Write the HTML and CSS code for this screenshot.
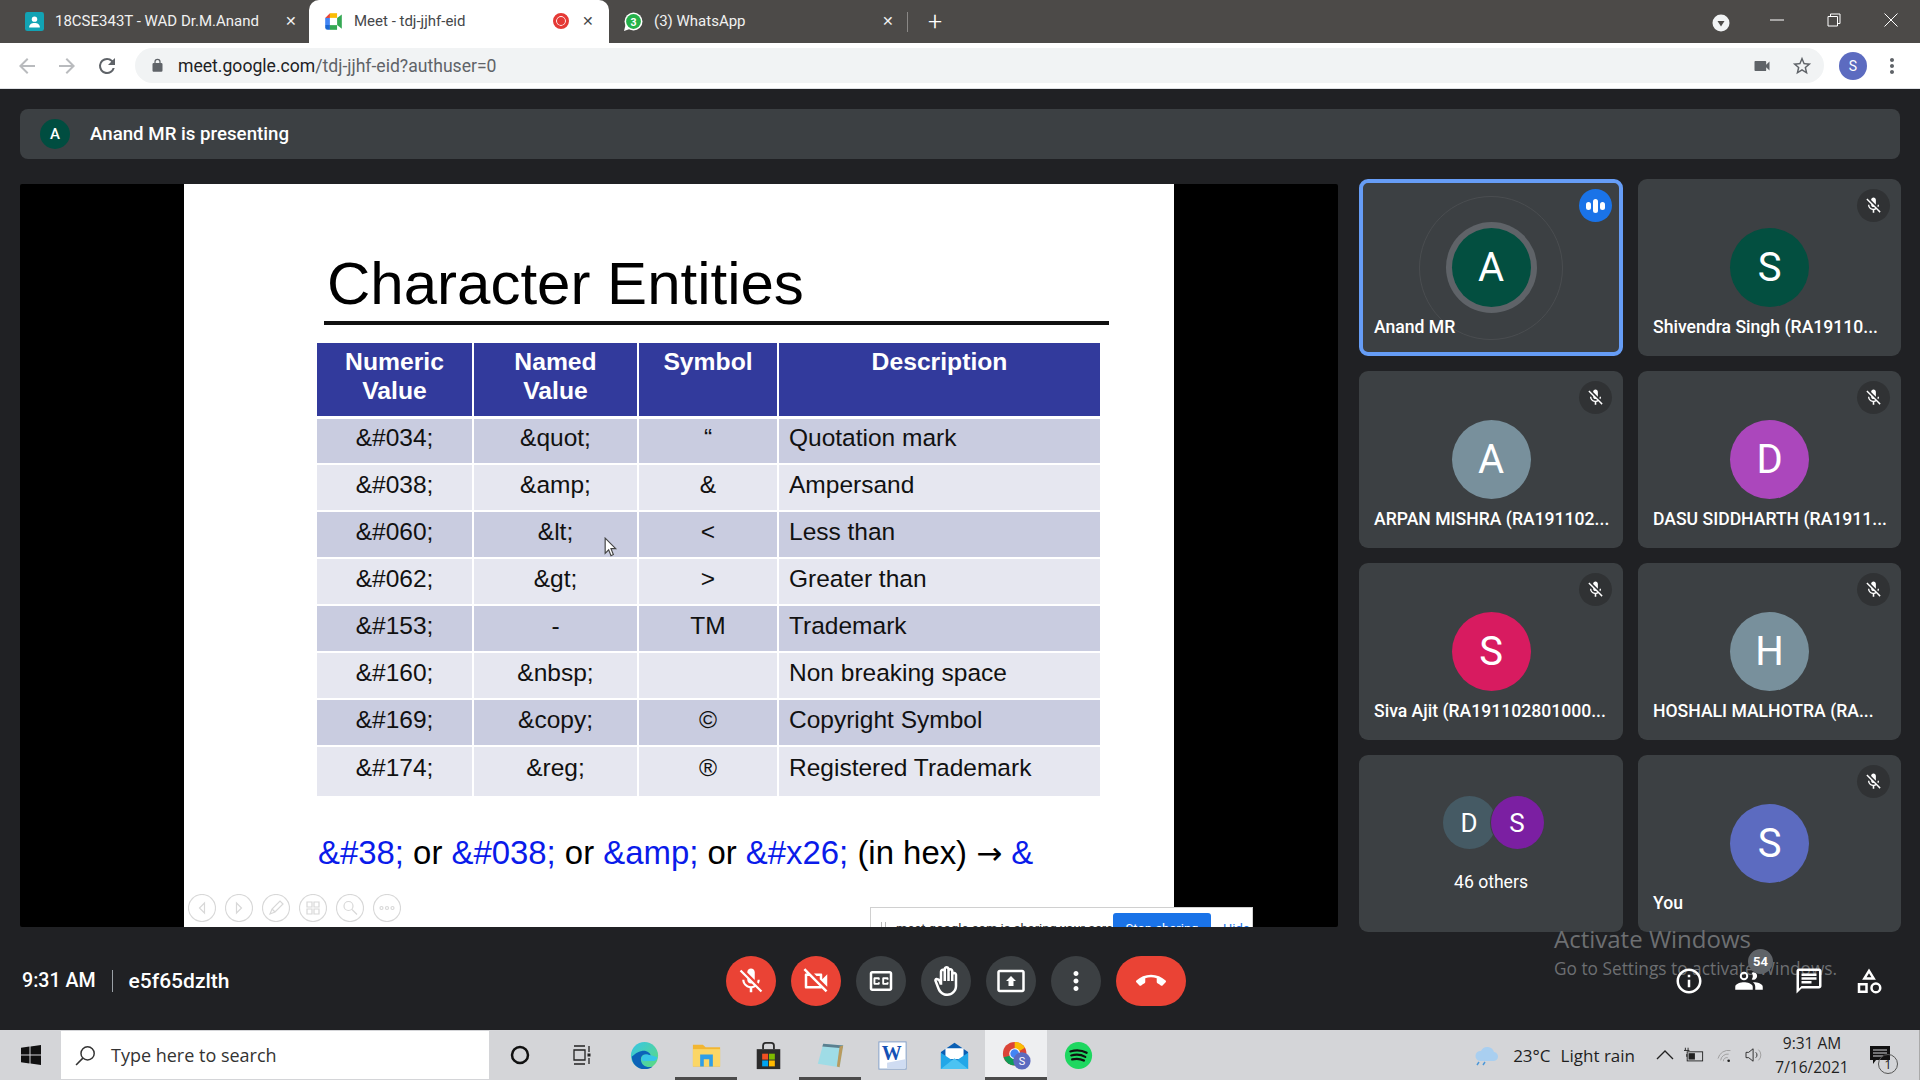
FILE: index.html
```html
<!DOCTYPE html>
<html lang="en">
<head>
    <meta charset="UTF-8">
    <title>Meet - tdj-jjhf-eid</title>
    <link rel="stylesheet" href="styles.css">
</head>
<body>
    <svg class="defs" aria-hidden="true">
        <symbol id="i-mic-off" viewBox="0 0 24 24"><path d="M19 11h-1.7c0 .74-.16 1.43-.43 2.05l1.23 1.23c.56-.98.9-2.09.9-3.28zm-4.02.17c0-.06.02-.11.02-.17V5c0-1.66-1.34-3-3-3S9 3.34 9 5v.18l5.98 5.99zM4.27 3L3 4.27l6.01 6.01V11c0 1.66 1.33 3 2.99 3 .22 0 .44-.03.65-.08l1.66 1.66c-.71.33-1.5.52-2.31.52-2.76 0-5.3-2.1-5.3-5.1H5c0 3.41 2.72 6.23 6 6.72V21h2v-3.28c.91-.13 1.77-.45 2.54-.9L19.73 21 21 19.73 4.27 3z"/></symbol>
        <symbol id="i-cam-off" viewBox="0 0 24 24"><path d="M9.56 8l-2-2-4.15-4.14L2 3.27 4.73 6H4c-.55 0-1 .45-1 1v10c0 .55.45 1 1 1h12c.21 0 .39-.08.55-.18L19.73 21l1.41-1.41-8.86-8.86L9.56 8zM5 16V8h1.73l8 8H5zm10-8v2.61l6 6V6.5l-4 4V7c0-.55-.45-1-1-1h-5.61l2 2H15z"/></symbol>
        <symbol id="i-cc" viewBox="0 0 24 24"><path d="M19 4H5c-1.11 0-2 .9-2 2v12c0 1.1.89 2 2 2h14c1.1 0 2-.9 2-2V6c0-1.1-.9-2-2-2zm0 14H5V6h14v12zM7 15h3c.55 0 1-.45 1-1v-1H9.5v.5h-2v-3h2v.5H11v-1c0-.55-.45-1-1-1H7c-.55 0-1 .45-1 1v4c0 .55.45 1 1 1zm7 0h3c.55 0 1-.45 1-1v-1h-1.5v.5h-2v-3h2v.5H18v-1c0-.55-.45-1-1-1h-3c-.55 0-1 .45-1 1v4c0 .55.45 1 1 1z"/></symbol>
        <symbol id="i-hand" viewBox="0 0 24 24"><path d="M21 7c0-1.38-1.12-2.5-2.5-2.5-.17 0-.34.02-.5.05V4c0-1.38-1.12-2.5-2.5-2.5-.23 0-.46.03-.67.09C14.46.66 13.56 0 12.5 0c-1.23 0-2.25.89-2.46 2.06C9.87 2.02 9.69 2 9.5 2 8.12 2 7 3.12 7 4.5v5.89c-.34-.31-.76-.54-1.22-.66L5.01 9.5c-.83-.23-1.7.09-2.19.83-.38.57-.4 1.31-.15 1.95l2.56 6.43C6.49 21.91 9.57 24 13 24c4.42 0 8-3.58 8-8V7zm-2 9c0 3.31-2.69 6-6 6-2.61 0-4.95-1.59-5.91-4.01l-2.6-6.54.53.14c.46.12.83.46 1 .9L7 15h2V4.5c0-.28.22-.5.5-.5s.5.22.5.5V12h2V2.5c0-.28.22-.5.5-.5s.5.22.5.5V12h2V4c0-.28.22-.5.5-.5s.5.22.5.5v8h2V7c0-.28.22-.5.5-.5s.5.22.5.5v9z"/></symbol>
        <symbol id="i-present" viewBox="0 0 24 24"><path d="M21 3H3c-1.11 0-2 .89-2 2v14c0 1.11.89 2 2 2h18c1.11 0 2-.89 2-2V5c0-1.11-.89-2-2-2zm0 16.02H3V4.98h18v14.04zM10 12H8l4-4 4 4h-2v4h-4v-4z"/></symbol>
        <symbol id="i-more" viewBox="0 0 24 24"><path d="M12 8c1.1 0 2-.9 2-2s-.9-2-2-2-2 .9-2 2 .9 2 2 2zm0 2c-1.1 0-2 .9-2 2s.9 2 2 2 2-.9 2-2-.9-2-2-2zm0 6c-1.1 0-2 .9-2 2s.9 2 2 2 2-.9 2-2-.9-2-2-2z"/></symbol>
        <symbol id="i-end" viewBox="0 0 24 24"><path d="M12 9c-1.6 0-3.15.25-4.6.72v3.1c0 .39-.23.74-.56.9-.98.49-1.87 1.12-2.66 1.85-.18.18-.43.28-.7.28-.28 0-.53-.11-.71-.29L.29 13.08c-.18-.17-.29-.42-.29-.7 0-.28.11-.53.29-.71C3.34 8.78 7.46 7 12 7s8.66 1.78 11.71 4.67c.18.18.29.43.29.71 0 .28-.11.53-.29.71l-2.48 2.48c-.18.18-.43.29-.71.29-.27 0-.52-.11-.7-.28-.79-.74-1.69-1.36-2.67-1.85-.33-.16-.56-.5-.56-.9v-3.1C15.15 9.25 13.6 9 12 9z"/></symbol>
        <symbol id="i-info" viewBox="0 0 24 24"><path d="M11 7h2v2h-2zm0 4h2v6h-2zm1-9C6.48 2 2 6.48 2 12s4.48 10 10 10 10-4.48 10-10S17.52 2 12 2zm0 18c-4.41 0-8-3.59-8-8s3.59-8 8-8 8 3.59 8 8-3.59 8-8 8z"/></symbol>
        <symbol id="i-people" viewBox="0 0 24 24"><path d="M8 13c-2.33 0-7 1.17-7 3.5V19h14v-2.5c0-2.33-4.67-3.5-7-3.5zm8 0c-.29 0-.62.02-.97.05 1.16.84 1.97 1.97 1.97 3.45V19h6v-2.5c0-2.33-4.67-3.5-7-3.5z"/><circle cx="8" cy="8" r="2.6" fill="none" stroke="#fff" stroke-width="1.6"/><path d="M14.2 5.3a3 3 0 1 1 0 5.4 5 5 0 0 0 0-5.4z"/></symbol>
        <symbol id="i-chat" viewBox="0 0 24 24"><path d="M20 2H4c-1.1 0-2 .9-2 2v18l4-4h14c1.1 0 2-.9 2-2V4c0-1.1-.9-2-2-2zm0 14H6l-2 2V4h16v12zM6 6h12v2H6zm0 3h12v2H6zm0 3h8v2H6z"/></symbol>
        <symbol id="i-shapes" viewBox="0 0 24 24"><path d="M12 2l5.500 9h-11L12 2zm0 3.840L10.070 9h3.860L12 5.840z"/><path d="M3 13.500h8v8H3v-8zm2 2v4h4v-4H5z"/><path d="M17.500 13a4.500 4.500 0 1 1 0 9 4.500 4.500 0 0 1 0-9zm0 2a2.500 2.500 0 1 0 0 5 2.500 2.500 0 0 0 0-5z"/></symbol>
    </svg>

    <div class="tab-strip">
        <div class="tab first">
            <svg class="fav" viewBox="0 0 16 16"><rect width="16" height="16" rx="2" fill="#12a3b4"/><circle cx="8" cy="6" r="2.300" fill="#fff"/><path d="M3.500 13c0-2.500 2-3.700 4.500-3.700s4.500 1.200 4.500 3.700z" fill="#fff"/></svg>
            <span class="tab-title">18CSE343T - WAD Dr.M.Anand</span>
            <span class="tab-x">✕</span>
        </div>
        <div class="tab active">
            <svg class="fav" viewBox="0 0 16 16"><path d="M1 5l4-4v4z" fill="#ea4335"/><path d="M5 1h6v4H5z" fill="#fbbc04"/><path d="M1 5h4v6H1z" fill="#4285f4"/><path d="M1 11h4v4H3a2 2 0 0 1-2-2z" fill="#1967d2"/><path d="M5 11h6v4H5z" fill="#34a853"/><path d="M11 5l4-3v12l-4-3z" fill="#34a853"/><rect x="5" y="5" width="6" height="6" fill="#fff"/></svg>
            <span class="tab-title">Meet - tdj-jjhf-eid</span>
            <span class="rec"></span>
            <span class="tab-x">✕</span>
        </div>
        <div class="tab">
            <svg class="fav" viewBox="0 0 18 18"><circle cx="9" cy="9" r="8.500" fill="#fff"/><circle cx="9" cy="9" r="7" fill="#25b14a"/><path d="M0 18l1.500-6 4 4z" fill="#fff"/><text x="9" y="12.800" class="fav-num">3</text></svg>
            <span class="tab-title">(3) WhatsApp</span>
            <span class="tab-x">✕</span>
        </div>
        <span class="tab-sep"></span>
        <span class="tab-plus">+</span>
        <div class="win-controls">
            <svg class="tab-search" viewBox="0 0 18 18"><circle cx="9" cy="9" r="8.500" fill="#f1f3f4"/><path d="M5.500 7h7L9 12.500z" fill="#4c4a48"/></svg>
            <svg class="win-btn" viewBox="0 0 14 14"><path d="M0 7h14" stroke="#fff" fill="none"/></svg>
            <svg class="win-btn" viewBox="0 0 14 14"><path d="M1 3.500h9.500V13H1zM3.500 3.500V1H13v9.500h-2.500" stroke="#fff" fill="none"/></svg>
            <svg class="win-btn" viewBox="0 0 14 14"><path d="M.5.500l13 13M13.500.500l-13 13" stroke="#fff" fill="none"/></svg>
        </div>
    </div>

    <div class="toolbar">
        <svg class="nav-ico faded" viewBox="0 0 24 24"><path d="M20 11H7.830l5.590-5.590L12 4l-8 8 8 8 1.410-1.410L7.830 13H20z"/></svg>
        <svg class="nav-ico faded" viewBox="0 0 24 24"><path d="M12 4l-1.410 1.410L16.170 11H4v2h12.170l-5.580 5.590L12 20l8-8z"/></svg>
        <svg class="nav-ico" viewBox="0 0 24 24"><path d="M17.650 6.350A7.960 7.960 0 0 0 12 4a8 8 0 1 0 7.730 10h-2.080A6 6 0 1 1 12 6c1.660 0 3.140.69 4.220 1.780L13 11h7V4z"/></svg>
        <div class="omnibox">
            <svg class="lock" viewBox="0 0 24 24"><path d="M18 8h-1V6A5 5 0 0 0 7 6v2H6a2 2 0 0 0-2 2v10c0 1.100.9 2 2 2h12a2 2 0 0 0 2-2V10a2 2 0 0 0-2-2zM9 6a3 3 0 0 1 6 0v2H9z"/></svg>
            <span class="url"><b>meet.google.com</b>/tdj-jjhf-eid?authuser=0</span>
            <svg class="omni-cam" viewBox="0 0 24 24"><path d="M17 10.500V7a1 1 0 0 0-1-1H4a1 1 0 0 0-1 1v10c0 .55.45 1 1 1h12a1 1 0 0 0 1-1v-3.500l4 4v-11z"/></svg>
            <svg class="omni-star" viewBox="0 0 24 24"><path d="M22 9.240l-7.190-.62L12 2 9.190 8.630 2 9.240l5.460 4.730L5.820 21 12 17.270 18.180 21l-1.630-7.030L22 9.240zM12 15.400l-3.760 2.270 1-4.280-3.320-2.880 4.380-.38L12 6.100l1.710 4.040 4.380.38-3.320 2.880 1 4.280L12 15.400z"/></svg>
        </div>
        <span class="profile">S</span>
        <svg class="nav-ico dots" viewBox="0 0 24 24"><use href="#i-more"/></svg>
    </div>

    <div class="page">
        <div class="present-bar">
            <span class="present-avatar">A</span>
            <span>Anand MR is presenting</span>
        </div>

        <div class="main">
            <div class="stage">
                <div class="slide">
                    <h1 class="slide-title">Character Entities</h1>
                    <div class="slide-rule"></div>
                    <table class="entities">
                        <thead>
                            <tr><th>Numeric<br>Value</th><th>Named<br>Value</th><th>Symbol</th><th>Description</th></tr>
                        </thead>
                        <tbody>
                            <tr><td>&amp;#034;</td><td>&amp;quot;</td><td>“</td><td class="desc">Quotation mark</td></tr>
                            <tr><td>&amp;#038;</td><td>&amp;amp;</td><td>&amp;</td><td class="desc">Ampersand</td></tr>
                            <tr><td>&amp;#060;</td><td>&amp;lt;</td><td>&lt;</td><td class="desc">Less than</td></tr>
                            <tr><td>&amp;#062;</td><td>&amp;gt;</td><td>&gt;</td><td class="desc">Greater than</td></tr>
                            <tr><td>&amp;#153;</td><td>-</td><td>TM</td><td class="desc">Trademark</td></tr>
                            <tr><td>&amp;#160;</td><td>&amp;nbsp;</td><td></td><td class="desc">Non breaking space</td></tr>
                            <tr><td>&amp;#169;</td><td>&amp;copy;</td><td>©</td><td class="desc">Copyright Symbol</td></tr>
                            <tr><td>&amp;#174;</td><td>&amp;reg;</td><td>®</td><td class="desc">Registered Trademark</td></tr>
                        </tbody>
                    </table>
                    <p class="slide-foot"><span class="blue">&amp;#38;</span> or <span class="blue">&amp;#038;</span> or <span class="blue">&amp;amp;</span> or <span class="blue">&amp;#x26;</span> (in hex) <span class="arrow">→</span> <span class="blue">&amp;</span></p>
                </div>
                <svg class="pointer" viewBox="0 0 12 18"><path d="M1 1v13l3-3 2 5 2-1-2-5h4z" fill="#fff" stroke="#444"/></svg>
                <div class="show-controls">
                    <svg class="show-btn" viewBox="0 0 28 28"><circle cx="14" cy="14" r="13.500"/><path d="M16.500 9l-5 5 5 5z"/></svg>
                    <svg class="show-btn" viewBox="0 0 28 28"><circle cx="14" cy="14" r="13.500"/><path d="M11.500 9l5 5-5 5z"/></svg>
                    <svg class="show-btn" viewBox="0 0 28 28"><circle cx="14" cy="14" r="13.500"/><path d="M8 20l2-5 8-8 3 3-8 8zM10 15l3 3"/></svg>
                    <svg class="show-btn" viewBox="0 0 28 28"><circle cx="14" cy="14" r="13.500"/><path d="M8 8h5v5H8zM15 8h5v5h-5zM8 15h5v5H8zM15 15h5v5h-5z"/></svg>
                    <svg class="show-btn" viewBox="0 0 28 28"><circle cx="14" cy="14" r="13.500"/><circle cx="12.500" cy="12" r="4.500"/><path d="M16 15.500l5 5"/></svg>
                    <svg class="show-btn" viewBox="0 0 28 28"><circle cx="14" cy="14" r="13.500"/><circle cx="8.500" cy="14" r="1.500"/><circle cx="14" cy="14" r="1.500"/><circle cx="19.500" cy="14" r="1.500"/></svg>
                </div>
                <div class="share-banner">
                    <span class="share-grip"></span>
                    <span class="share-text">meet.google.com is sharing your screen.</span>
                    <span class="share-stop">Stop sharing</span>
                    <span class="share-hide">Hide</span>
                </div>
            </div>

            <div class="tiles">
                <div class="tile speaking">
                    <span class="pulse"></span>
                    <span class="avatar ring green">A</span>
                    <span class="tile-chip talk"><i></i><i class="tall"></i><i></i></span>
                    <span class="tile-name">Anand MR</span>
                </div>
                <div class="tile">
                    <span class="avatar green">S</span>
                    <span class="tile-chip"><svg><use href="#i-mic-off"/></svg></span>
                    <span class="tile-name">Shivendra Singh (RA19110...</span>
                </div>
                <div class="tile">
                    <span class="avatar slate">A</span>
                    <span class="tile-chip"><svg><use href="#i-mic-off"/></svg></span>
                    <span class="tile-name">ARPAN MISHRA (RA191102...</span>
                </div>
                <div class="tile">
                    <span class="avatar orchid">D</span>
                    <span class="tile-chip"><svg><use href="#i-mic-off"/></svg></span>
                    <span class="tile-name">DASU SIDDHARTH (RA1911...</span>
                </div>
                <div class="tile">
                    <span class="avatar pink">S</span>
                    <span class="tile-chip"><svg><use href="#i-mic-off"/></svg></span>
                    <span class="tile-name">Siva Ajit (RA191102801000...</span>
                </div>
                <div class="tile">
                    <span class="avatar slate">H</span>
                    <span class="tile-chip"><svg><use href="#i-mic-off"/></svg></span>
                    <span class="tile-name">HOSHALI MALHOTRA (RA...</span>
                </div>
                <div class="tile others">
                    <div class="others-pics">
                        <span class="mini dusk">D</span>
                        <span class="mini violet">S</span>
                    </div>
                    <span class="others-label">46 others</span>
                </div>
                <div class="tile">
                    <span class="avatar indigo">S</span>
                    <span class="tile-chip"><svg><use href="#i-mic-off"/></svg></span>
                    <span class="tile-name">You</span>
                </div>
            </div>
        </div>

        <div class="call-bar">
            <div class="call-info">
                <span class="call-time">9:31 AM</span>
                <span class="call-sep"></span>
                <span class="call-code">e5f65dzlth</span>
            </div>
            <div class="call-btns">
                <span class="round red"><svg><use href="#i-mic-off"/></svg></span>
                <span class="round red"><svg><use href="#i-cam-off"/></svg></span>
                <span class="round"><svg><use href="#i-cc"/></svg></span>
                <span class="round"><svg><use href="#i-hand"/></svg></span>
                <span class="round"><svg><use href="#i-present"/></svg></span>
                <span class="round"><svg><use href="#i-more"/></svg></span>
                <span class="round red wide"><svg><use href="#i-end"/></svg></span>
            </div>
            <div class="activate">
                <div class="activate-big">Activate Windows</div>
                <div class="activate-small">Go to Settings to activate Windows.</div>
            </div>
            <div class="call-side">
                <span class="side-btn"><svg><use href="#i-info"/></svg></span>
                <span class="side-btn"><svg><use href="#i-people"/></svg><em class="count">54</em></span>
                <span class="side-btn"><svg><use href="#i-chat"/></svg></span>
                <span class="side-btn"><svg><use href="#i-shapes"/></svg></span>
            </div>
        </div>
    </div>

    <div class="taskbar">
        <span class="start">
            <svg viewBox="0 0 20 20"><path d="M0 2.800l8.500-1.200v8H0zM9.500 1.400L20 0v9.600H9.500zM0 10.500h8.500v8L0 17.300zM9.500 10.500H20V20L9.500 18.600z" fill="#111"/></svg>
        </span>
        <div class="search">
            <svg viewBox="0 0 20 20"><circle cx="12" cy="8" r="6.300" fill="none" stroke="#333" stroke-width="1.400"/><path d="M7.500 12.500L1 19" stroke="#333" stroke-width="1.500"/></svg>
            <span>Type here to search</span>
        </div>
        <span class="task small"><svg viewBox="0 0 22 22"><circle cx="11" cy="11" r="8" fill="none" stroke="#111" stroke-width="2.500"/></svg></span>
        <span class="task small"><svg viewBox="0 0 22 22"><path d="M3 2h11M3 20h11M3 6h11v10H3zM18 2v6M18 14v6" fill="none" stroke="#222" stroke-width="1.300"/><rect x="16.500" y="9.500" width="3" height="3" fill="#222"/></svg></span>
        <span class="task"><svg viewBox="0 0 32 32"><defs><linearGradient id="edge" x1="0" y1="0" x2="1" y2="1"><stop offset="0" stop-color="#36c5e8"/><stop offset="1" stop-color="#5fdc7a"/></linearGradient></defs><circle cx="16" cy="16" r="15" fill="url(#edge)"/><path d="M2 17c0 8 6 14 14 14 4 0 7-1 9-3-6 2-13-1-13-8 0-3 2-5 5-5 4 0 6 2 6 2 0-4-5-7-10-6-6 1-10 6-11 6z" fill="#0c63b8"/><path d="M13 20c0-3 2-5 5-5 3 0 6 1 12 3 0 0 0 4-4 4h-8c-3 0-5 0-5-2z" fill="#36c5e8"/></svg></span>
        <span class="task open"><svg viewBox="0 0 32 32"><path d="M1 4h11l3 3h16v21H1z" fill="#f2b632"/><path d="M1 9h30v19H1z" fill="#fbd666"/><path d="M9 15h14v13h-4v-8h-6v8H9z" fill="#2f9ee8"/></svg></span>
        <span class="task"><svg viewBox="0 0 32 32"><path d="M3 9h26v22H3z" fill="#2b2b2b"/><path d="M10 9V5a3 3 0 0 1 3-3h6a3 3 0 0 1 3 3v4" fill="none" stroke="#2b2b2b" stroke-width="2"/><rect x="9" y="14" width="6.500" height="6.500" fill="#f25022"/><rect x="16.500" y="14" width="6.500" height="6.500" fill="#7fba00"/><rect x="9" y="21.500" width="6.500" height="6.500" fill="#00a4ef"/><rect x="16.500" y="21.500" width="6.500" height="6.500" fill="#ffb900"/></svg></span>
        <span class="task open"><svg viewBox="0 0 32 32"><path d="M8 3l22 2-4 24-24-4z" fill="#9fdce6"/><path d="M8 3l22 2-1 3L7 6z" fill="#5b7f8f"/><path d="M30 5l-4 24-3-1 3-22z" fill="#b99a5e"/></svg></span>
        <span class="task"><svg viewBox="0 0 32 32"><rect x="1" y="1" width="30" height="30" fill="#fff" stroke="#7d9cc8"/><text x="15" y="21" class="word-w">W</text><path d="M10 24l20-4v10H10z" fill="#cfdcf2"/></svg></span>
        <span class="task"><svg viewBox="0 0 32 32"><path d="M1 12L16 2l15 10v19H1z" fill="#0a5fb4"/><path d="M6 8h20v12H6z" fill="#fff"/><path d="M1 13l15 10 15-10v18H1z" fill="#22a7e8"/><path d="M1 31l15-12 15 12z" fill="#4cc3f2"/></svg></span>
        <span class="task current"><svg viewBox="0 0 32 32"><circle cx="14" cy="14" r="13" fill="#db4437"/><path d="M14 1a13 13 0 0 1 11.300 6.500L14 14z" fill="#fbbc04"/><path d="M1.800 18A13 13 0 0 0 14 27l4-13z" fill="#0f9d58"/><circle cx="14" cy="14" r="6" fill="#fff"/><circle cx="14" cy="14" r="4.800" fill="#4285f4"/><circle cx="22" cy="22" r="9.500" fill="#5c6bc0"/><text x="22" y="26.500" class="chrome-s">S</text></svg></span>
        <span class="task"><svg viewBox="0 0 32 32"><circle cx="16" cy="16" r="15" fill="#1ed760"/><path d="M7 11.500c6-1.800 13-1.300 18 1.500M8 16c5-1.400 11-1 15.500 1.500M9 20.300c4.500-1.100 9-.8 13 1.300" fill="none" stroke="#111" stroke-width="2.400" stroke-linecap="round"/></svg></span>

        <div class="tray">
            <svg class="tray-weather" viewBox="0 0 26 22"><path d="M6 17a5 5 0 0 1 1-10 7 7 0 0 1 13 1 4.500 4.500 0 0 1-1 9z" fill="#a9cff0"/><path d="M3 21l2-3M9 21l2-3" stroke="#4c97d8" stroke-width="1.500"/></svg>
            <span class="tray-temp">23°C</span>
            <span class="tray-temp">Light rain</span>
            <svg class="tray-ico chev" viewBox="0 0 18 10"><path d="M1 9l8-8 8 8" fill="none" stroke="#222" stroke-width="1.300"/></svg>
            <svg class="tray-ico batt" viewBox="0 0 22 16"><rect x="3.500" y="4.500" width="17" height="10" fill="none" stroke="#222"/><rect x="5" y="6" width="7" height="7" fill="#222"/><path d="M0 3h6M1.500 0v3M4.500 0v3M3 7V10" stroke="#222" fill="none"/></svg>
            <svg class="tray-ico wifi" viewBox="0 0 20 18"><path d="M1 13a12 12 0 0 1 14-9M4 15a8 8 0 0 1 9-7M7 16a4 4 0 0 1 5-4" fill="none" stroke="#9a9a9a"/><circle cx="13" cy="15.500" r="1.500" fill="#222"/></svg>
            <svg class="tray-ico vol" viewBox="0 0 20 18"><path d="M1 6h3l5-4v14l-5-4H1z" fill="none" stroke="#222"/><path d="M12 6a4 4 0 0 1 0 6" fill="none" stroke="#222"/><path d="M15 3a8 8 0 0 1 0 12" fill="none" stroke="#999"/></svg>
            <div class="clock"><span>9:31 AM</span><span>7/16/2021</span></div>
            <span class="notify">
                <svg viewBox="0 0 20 18"><path d="M0 0h20v14H6l-3 4v-4H0z" fill="#111"/><path d="M3 4h14M3 7h14M3 10h10" stroke="#d4d5d8"/></svg>
                <em class="notify-count">1</em>
            </span>
        </div>
    </div>
</body>
</html>
```

FILE: styles.css
```css
* {
    box-sizing: border-box;
}
body {
    margin: 0;
    height: 1080px;
    display: flex;
    flex-direction: column;
    overflow: hidden;
    font-family: Roboto, "Liberation Sans", sans-serif;
    background: #202124;
}
.defs {
    display: none;
}

/* browser tabs */
.tab-strip {
    height: 43px;
    display: flex;
    align-items: center;
    background: #4c4a48;
    color: #fff;
    font-size: 15px;
}
.tab {
    width: 300px;
    height: 43px;
    display: flex;
    align-items: center;
    padding: 0 15px 1px;
    color: #f1f1f1;
}
.tab.first {
    width: 309px;
    padding: 0 12px 1px 25px;
}
.tab.active {
    background: #fff;
    color: #45474a;
    border-radius: 10px 10px 0 0;
}
.fav {
    width: 19px;
    height: 19px;
    margin-right: 11px;
    flex: none;
}
.fav-num {
    font-size: 10px;
    font-weight: 700;
    fill: #fff;
    text-anchor: middle;
}
.tab-title {
    flex: 1;
    white-space: nowrap;
}
.tab-x {
    font-size: 14px;
    margin-left: 12px;
}
.rec {
    width: 16px;
    height: 16px;
    border-radius: 50%;
    background: #e53935;
    border: 3px solid #e53935;
    box-shadow: inset 0 0 0 1px #fff;
    margin-right: 1px;
}
.tab-sep {
    width: 1px;
    height: 20px;
    background: #8a8886;
    margin-left: -2px;
}
.tab-plus {
    font-size: 25px;
    margin-left: 20px;
    font-weight: 300;
}
.win-controls {
    margin-left: auto;
    display: flex;
    align-items: center;
    gap: 43px;
    padding-right: 22px;
}
.tab-search {
    width: 18px;
    height: 18px;
    margin-right: -3px;
    margin-top: 3px;
}
.win-btn {
    width: 14px;
    height: 14px;
    margin-top: -4px;
}

/* address row */
.toolbar {
    height: 46px;
    background: #fff;
    border-bottom: 1px solid #dfe1e5;
    display: flex;
    align-items: center;
    padding-left: 15px;
}
.nav-ico {
    width: 24px;
    height: 24px;
    margin-right: 16px;
    fill: #5f6368;
    flex: none;
}
.nav-ico.faded {
    fill: #b9bbbe;
}
.omnibox {
    width: 1689px;
    height: 35px;
    flex: none;
    background: #f1f3f4;
    border-radius: 18px;
    display: flex;
    align-items: center;
    padding-left: 15px;
}
.lock {
    width: 15px;
    height: 15px;
    fill: #5f6368;
    margin-right: 13px;
}
.url {
    font-size: 17.6px;
    color: #5f6368;
}
.url b {
    font-weight: 400;
    color: #202124;
}
.omni-cam {
    width: 20px;
    height: 20px;
    fill: #5f6368;
    margin-left: auto;
}
.omni-star {
    width: 22px;
    height: 22px;
    fill: #5f6368;
    margin: 0 11px 0 19px;
}
.profile {
    width: 28px;
    height: 28px;
    flex: none;
    margin-left: 15px;
    border-radius: 50%;
    background: #5c6bc0;
    color: #fff;
    font-size: 14px;
    display: flex;
    align-items: center;
    justify-content: center;
}
.dots {
    margin: 0 0 0 13px;
}

/* meet page */
.page {
    flex: 1;
    display: flex;
    flex-direction: column;
    color: #fff;
}
.present-bar {
    height: 50px;
    margin: 20px 20px;
    background: #3c4043;
    border-radius: 8px;
    display: flex;
    align-items: center;
    padding-left: 20px;
    gap: 20px;
    font-size: 18.7px;
    font-weight: 500;
}
.present-avatar {
    width: 30px;
    height: 30px;
    border-radius: 50%;
    background: #004d40;
    font-size: 15px;
    display: flex;
    align-items: center;
    justify-content: center;
}
.main {
    height: 748px;
    display: flex;
    padding-left: 20px;
    gap: 21px;
}
.stage {
    width: 1318px;
    height: 743px;
    margin-top: 5px;
    background: #000;
    position: relative;
    overflow: hidden;
    border-radius: 2px;
}
.slide {
    width: 990px;
    height: 743px;
    margin: 0 auto;
    background: #fff;
    color: #000;
    font-family: "Liberation Sans", Arial, sans-serif;
    padding: 67px 0 0 133px;
}
.slide-title {
    margin: 0 0 0 10px;
    font-size: 60px;
    line-height: 66px;
    font-weight: 400;
}
.slide-rule {
    width: 785px;
    height: 4px;
    background: #111;
    margin: 4px 0 18px 7px;
}
.entities {
    width: 783px;
    border-collapse: collapse;
    table-layout: fixed;
    font-size: 24.5px;
    text-align: center;
}
.entities th:nth-child(1) { width: 156px; }
.entities th:nth-child(2) { width: 165px; }
.entities th:nth-child(3) { width: 140px; }
.entities th {
    background: #323a9c;
    color: #fff;
    font-weight: 700;
    font-size: 24.7px;
    height: 74px;
    vertical-align: top;
    padding-top: 4px;
    line-height: 29px;
    border-right: 2px solid #fff;
    border-bottom: 3px solid #fff;
}
.entities td {
    height: 47px;
    padding: 0 0 5px;
    border-right: 2px solid #fff;
    border-bottom: 2px solid #fff;
    background: #c9cce0;
    color: #111;
}
.entities tr:nth-child(even) td {
    background: #e6e7f0;
}
.entities tr:last-child td {
    height: 51px;
    padding-bottom: 7px;
}
.entities th:last-child,
.entities td:last-child {
    border-right: 0;
}
.entities td.desc {
    text-align: left;
    padding-left: 10px;
}
.slide-foot {
    margin: 35px 0 0 1px;
    font-size: 32.9px;
    line-height: 40px;
    white-space: nowrap;
}
.blue {
    color: #0a1bea;
}
.arrow {
    font-family: "DejaVu Sans", sans-serif;
    font-size: 31px;
    line-height: 30px;
}
.pointer {
    width: 14px;
    height: 21px;
    position: absolute;
    left: 584px;
    top: 353px;
}
.show-controls {
    position: absolute;
    left: 168px;
    top: 710px;
    display: flex;
    gap: 9px;
}
.show-btn {
    width: 28px;
    height: 28px;
    fill: none;
    stroke: #d8d8d8;
    stroke-width: 1.200;
}
.share-banner {
    position: absolute;
    left: 850px;
    top: 723px;
    width: 383px;
    height: 40px;
    background: #fff;
    border: 1px solid #d0d0d0;
    display: flex;
    align-items: flex-start;
    padding: 5px 0 0 10px;
    font-size: 13px;
    color: #333;
    white-space: nowrap;
}
.share-grip {
    width: 5px;
    height: 14px;
    margin: 9px 10px 0 0;
    border-left: 1px solid #bbb;
    border-right: 1px solid #bbb;
}
.share-text {
    width: 217px;
    margin-top: 8px;
}
.share-stop {
    width: 98px;
    height: 30px;
    background: #1a73e8;
    color: #fff;
    border-radius: 3px;
    text-align: center;
    padding-top: 8px;
}
.share-hide {
    margin: 8px 0 0 12px;
    color: #1a73e8;
}

/* participant tiles */
.tiles {
    display: grid;
    grid-template-columns: 264px 263px;
    grid-auto-rows: 177px;
    column-gap: 15px;
    row-gap: 15px;
    height: 752px;
}
.tile {
    position: relative;
    background: #3c4043;
    border-radius: 9px;
    display: flex;
    align-items: center;
    justify-content: center;
}
.tile.speaking {
    border: 4px solid #669df6;
}
.avatar {
    width: 79px;
    height: 79px;
    border-radius: 50%;
    font-size: 40px;
    display: flex;
    align-items: center;
    justify-content: center;
}
.avatar.ring {
    box-shadow: 0 0 0 6px #5f6368;
    position: relative;
}
.pulse {
    position: absolute;
    width: 144px;
    height: 144px;
    border: 1px solid #4a4d50;
    border-radius: 50%;
}
.green { background: #034f40; }
.slate { background: #78909c; }
.orchid { background: #ab47bc; }
.pink { background: #d81b60; }
.indigo { background: #5c6bc0; }
.dusk { background: #455a64; }
.violet { background: #7b1fa2; }
.tile-chip {
    position: absolute;
    top: 10px;
    right: 11px;
    width: 33px;
    height: 33px;
    border-radius: 50%;
    background: #303234;
    display: flex;
    align-items: center;
    justify-content: center;
    gap: 2px;
    fill: #fff;
}
.tile-chip svg {
    width: 19px;
    height: 19px;
}
.speaking .tile-chip {
    top: 6px;
    right: 7px;
}
.tile-chip.talk {
    background: #1a73e8;
}
.tile-chip i {
    width: 5px;
    height: 8px;
    border-radius: 3px;
    background: #fff;
}
.tile-chip i.tall {
    height: 14px;
}
.tile-name {
    position: absolute;
    left: 15px;
    bottom: 19px;
    font-size: 17.6px;
    font-weight: 500;
    white-space: nowrap;
}
.speaking .tile-name {
    left: 11px;
    bottom: 15px;
}
.others {
    flex-direction: column;
    padding-top: 4px;
}
.others-pics {
    display: flex;
    margin: -3px 0 0 4px;
}
.mini {
    width: 53px;
    height: 53px;
    border-radius: 50%;
    font-size: 26px;
    display: flex;
    align-items: center;
    justify-content: center;
}
.mini + .mini {
    margin-left: -5px;
    box-shadow: -1px 0 0 #3c4043;
}
.others-label {
    margin-top: 23px;
    font-size: 17.6px;
}

/* call controls */
.call-bar {
    height: 103px;
    display: flex;
    align-items: center;
    position: relative;
    padding-left: 22px;
}
.call-info {
    width: 704px;
    display: flex;
    align-items: center;
    gap: 16px;
    font-weight: 500;
    margin-top: 4px;
}
.call-time {
    font-size: 19.6px;
}
.call-code {
    font-size: 21px;
}
.call-sep {
    width: 1px;
    height: 22px;
    background: #9aa0a6;
}
.call-btns {
    display: flex;
    gap: 15px;
    margin-top: 5px;
}
.round {
    width: 50px;
    height: 50px;
    border-radius: 25px;
    background: #3c4043;
    display: flex;
    align-items: center;
    justify-content: center;
    fill: #fff;
}
.round svg {
    width: 30px;
    height: 30px;
}
.round.red {
    background: #ea4335;
}
.round.wide {
    width: 70px;
}
.call-side {
    margin-left: auto;
    display: flex;
    align-items: center;
    gap: 30px;
    padding-right: 36px;
    margin-top: 5px;
    position: relative;
}
.side-btn {
    width: 30px;
    height: 30px;
    position: relative;
    fill: #fff;
}
.side-btn svg {
    width: 30px;
    height: 30px;
}
.count {
    position: absolute;
    left: 14px;
    top: -17px;
    width: 25px;
    height: 25px;
    border-radius: 50%;
    background: #5f6368;
    font-size: 13px;
    font-weight: 700;
    font-style: normal;
    display: flex;
    align-items: center;
    justify-content: center;
}
.activate {
    position: absolute;
    left: 1554px;
    top: -6px;
    color: #6d6f72;
    font-family: "Open Sans", "Noto Sans", sans-serif;
    white-space: nowrap;
}
.activate-big {
    font-size: 24px;
    line-height: 36px;
}
.activate-small {
    font-size: 17.300px;
    line-height: 24px;
}

/* windows taskbar */
.taskbar {
    height: 50px;
    background: #d4d5d8;
    display: flex;
    align-items: stretch;
    font-family: "Open Sans", "Noto Sans", sans-serif;
    color: #1f1f1f;
}
.start {
    width: 61px;
    display: flex;
    align-items: center;
    justify-content: center;
}
.start svg {
    width: 20px;
    height: 20px;
}
.search {
    width: 428px;
    margin: 1px 0;
    background: #fff;
    display: flex;
    align-items: center;
    padding-left: 14px;
    gap: 15px;
    font-size: 18px;
    color: #333;
}
.search svg {
    width: 21px;
    height: 21px;
}
.task {
    width: 62px;
    display: flex;
    align-items: center;
    justify-content: center;
    border-bottom: 3px solid transparent;
    padding-top: 3px;
}
.task svg {
    width: 29px;
    height: 29px;
}
.task.small svg {
    width: 22px;
    height: 22px;
}
.task.open {
    border-bottom-color: #4b4b4b;
}
.task.current {
    background: #eeeff1;
    border-bottom-color: #4b4b4b;
}
.word-w {
    font-family: "Liberation Serif", serif;
    font-size: 22px;
    font-weight: 700;
    fill: #1451b5;
    text-anchor: middle;
}
.chrome-s {
    font-family: Roboto, sans-serif;
    font-size: 12px;
    fill: #fff;
    text-anchor: middle;
}
.tray {
    margin-left: auto;
    display: flex;
    align-items: center;
    font-size: 17px;
    padding-right: 5px;
    border-right: 1px solid #aaa;
}
.tray-weather {
    width: 26px;
    height: 22px;
    margin-right: 13px;
}
.tray-temp {
    margin-right: 10px;
}
.tray-ico {
    height: 16px;
}
.chev {
    width: 18px;
    height: 10px;
    margin: 0 10px 0 11px;
}
.batt {
    width: 20px;
    margin-right: 13px;
}
.wifi {
    width: 18px;
    margin-right: 9px;
}
.vol {
    width: 20px;
    margin-right: 14px;
}
.clock {
    width: 68px;
    display: flex;
    flex-direction: column;
    align-items: center;
    font-size: 15.5px;
    line-height: 24px;
    white-space: nowrap;
}
.notify {
    position: relative;
    width: 68px;
    display: flex;
    justify-content: center;
}
.notify svg {
    width: 20px;
    height: 18px;
}
.notify-count {
    position: absolute;
    right: 16px;
    top: 8px;
    width: 20px;
    height: 20px;
    border: 1px solid #555;
    border-radius: 50%;
    font-size: 13px;
    font-style: normal;
    display: flex;
    align-items: center;
    justify-content: center;
}
```
